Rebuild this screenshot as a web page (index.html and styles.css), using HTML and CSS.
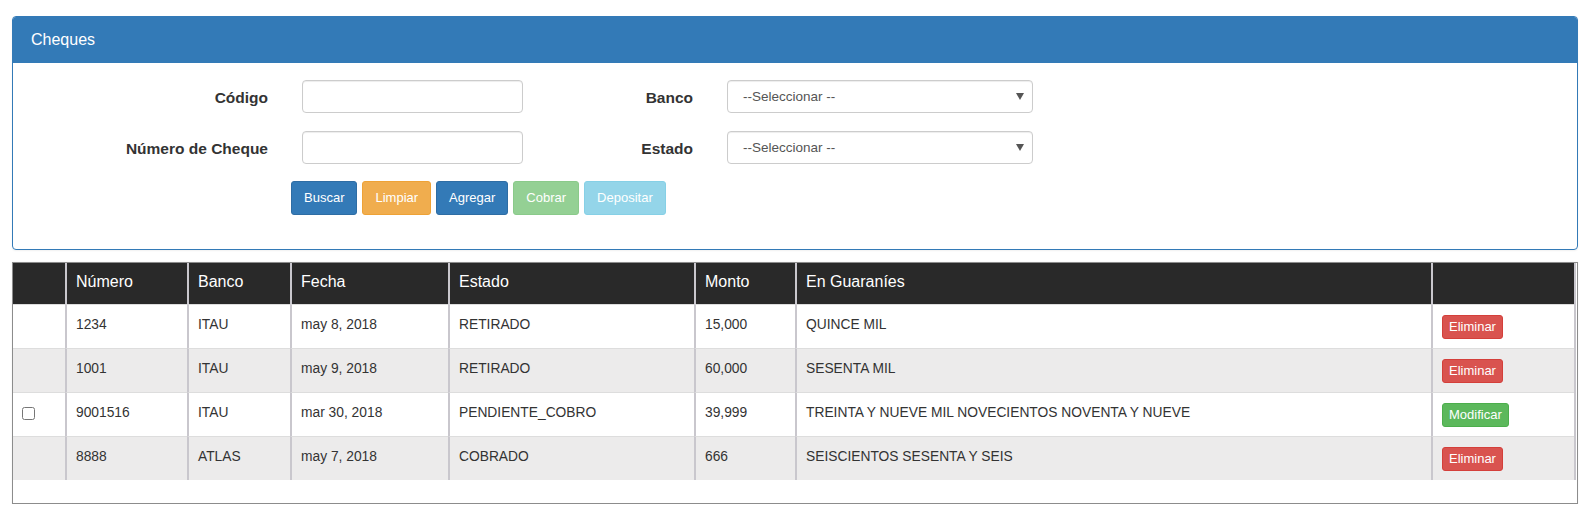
FILE: index.html
```html
<!DOCTYPE html>
<html lang="es">
<head>
<meta charset="utf-8">
<title>Cheques</title>
<link rel="stylesheet" href="styles.css">
</head>
<body>
<div class="page">
  <section class="panel">
    <header class="panel-heading">Cheques</header>
    <div class="panel-body">
      <div class="form-grid">
        <label class="lbl">Código</label>
        <input class="field" type="text">
        <label class="lbl">Banco</label>
        <div class="select">
          <span class="select-text">--Seleccionar --</span>
          <svg class="caret" width="8" height="7" viewBox="0 0 8 7"><polygon points="0,0 8,0 4,7" fill="#555"/></svg>
        </div>
        <label class="lbl">Número de Cheque</label>
        <input class="field" type="text">
        <label class="lbl">Estado</label>
        <div class="select">
          <span class="select-text">--Seleccionar --</span>
          <svg class="caret" width="8" height="7" viewBox="0 0 8 7"><polygon points="0,0 8,0 4,7" fill="#555"/></svg>
        </div>
      </div>
      <div class="actions">
        <button class="btn btn-primary">Buscar</button>
        <button class="btn btn-warning">Limpiar</button>
        <button class="btn btn-primary">Agregar</button>
        <button class="btn btn-success disabled">Cobrar</button>
        <button class="btn btn-info disabled">Depositar</button>
      </div>
    </div>
  </section>

  <div class="table-box">
    <table class="grid">
      <thead>
        <tr>
          <th class="c1"></th>
          <th class="c2">Número</th>
          <th class="c3">Banco</th>
          <th class="c4">Fecha</th>
          <th class="c5">Estado</th>
          <th class="c6">Monto</th>
          <th class="c7">En Guaraníes</th>
          <th class="c8"></th>
        </tr>
      </thead>
      <tbody>
        <tr>
          <td></td>
          <td>1234</td>
          <td>ITAU</td>
          <td>may 8, 2018</td>
          <td>RETIRADO</td>
          <td>15,000</td>
          <td>QUINCE MIL</td>
          <td><button class="sbtn sbtn-danger">Eliminar</button></td>
        </tr>
        <tr class="alt">
          <td></td>
          <td>1001</td>
          <td>ITAU</td>
          <td>may 9, 2018</td>
          <td>RETIRADO</td>
          <td>60,000</td>
          <td>SESENTA MIL</td>
          <td><button class="sbtn sbtn-danger">Eliminar</button></td>
        </tr>
        <tr>
          <td><input class="check" type="checkbox"></td>
          <td>9001516</td>
          <td>ITAU</td>
          <td>mar 30, 2018</td>
          <td>PENDIENTE_COBRO</td>
          <td>39,999</td>
          <td>TREINTA Y NUEVE MIL NOVECIENTOS NOVENTA Y NUEVE</td>
          <td><button class="sbtn sbtn-success">Modificar</button></td>
        </tr>
        <tr class="alt">
          <td></td>
          <td>8888</td>
          <td>ATLAS</td>
          <td>may 7, 2018</td>
          <td>COBRADO</td>
          <td>666</td>
          <td>SEISCIENTOS SESENTA Y SEIS</td>
          <td><button class="sbtn sbtn-danger">Eliminar</button></td>
        </tr>
      </tbody>
    </table>
  </div>
</div>
</body>
</html>
```

FILE: styles.css
```css
* { box-sizing: border-box; }

html, body {
  margin: 0;
  padding: 0;
  background: #fff;
}

body {
  font-family: "Liberation Sans", Arial, Helvetica, sans-serif;
  font-size: 14px;
  color: #333;
}

.page {
  padding: 16px 11px 0 12px;
}

/* ---------- panel ---------- */
.panel {
  border: 1px solid #337ab7;
  border-radius: 4px;
  box-shadow: 0 1px 2px rgba(0, 0, 0, 0.06);
  height: 234px;
}

.panel-heading {
  background: #337ab7;
  color: #fff;
  font-size: 16px;
  line-height: 20px;
  padding: 13px 17px 13px 18px;
  border-radius: 3px 3px 0 0;
}

.panel-body {
  padding: 17px 0 0 0;
}

.form-grid {
  display: grid;
  grid-template-columns: 255px 221px 136px 306px;
  grid-auto-rows: 33px;
  column-gap: 34px;
  row-gap: 18px;
  align-items: center;
}

.lbl {
  text-align: right;
  font-weight: bold;
  font-size: 15.5px;
  color: #333;
  padding-top: 2px;
}

.field {
  height: 33px;
  width: 100%;
  border: 1px solid #ccc;
  border-radius: 4px;
  box-shadow: inset 0 1px 1px rgba(0, 0, 0, 0.075);
  background: #fff;
  margin: 0;
  padding: 6px 12px;
  font: inherit;
}

.select {
  position: relative;
  height: 33px;
  border: 1px solid #ccc;
  border-radius: 4px;
  background: #fff;
  box-shadow: inset 0 1px 1px rgba(0, 0, 0, 0.075);
  display: flex;
  align-items: center;
  padding-left: 15px;
}

.select-text {
  font-size: 13.5px;
  color: #555;
}

.caret {
  position: absolute;
  right: 8px;
  top: 12px;
  display: block;
}

.actions {
  display: flex;
  gap: 5px;
  margin: 17px 0 0 278px;
}

.btn {
  font-family: inherit;
  font-size: 13px;
  line-height: 18px;
  padding: 7px 12px;
  border: 1px solid transparent;
  border-radius: 3px;
  color: #fff;
  cursor: pointer;
}

.btn-primary { background: #337ab7; border-color: #2e6da4; }
.btn-warning { background: #f0ad4e; border-color: #eea236; }
.btn-success { background: #5cb85c; border-color: #4cae4c; }
.btn-info    { background: #5bc0de; border-color: #46b8da; }
.btn.disabled { opacity: 0.65; }

/* ---------- table ---------- */
.table-box {
  margin-top: 12px;
  border: 1px solid #8c8c8c;
  padding: 0 2px 23px 0;
  box-shadow: 0 0 1px rgba(0, 0, 0, 0.1);
}

.grid {
  width: 100%;
  table-layout: fixed;
  border-collapse: separate;
  border-spacing: 0;
  border-right: 2px solid #c9c7cd;
}

.grid th,
.grid td {
  text-align: left;
  vertical-align: top;
  padding: 10px 10px 9px 9px;
  line-height: 20px;
}

.grid th + th,
.grid td + td {
  border-left: 2px solid #c9c7cd;
}

.grid thead th {
  background: #292929;
  color: #fff;
  font-weight: normal;
  font-size: 16px;
  padding-top: 9px;
  padding-bottom: 12px;
}

.grid tbody td {
  border-top: 1px solid #dddddd;
  color: #333;
  font-size: 13.8px;
}

.grid tbody tr.alt td {
  background: #ecebeb;
}

.c1 { width: 52px; }
.c2 { width: 122px; }
.c3 { width: 103px; }
.c4 { width: 158px; }
.c5 { width: 246px; }
.c6 { width: 101px; }
.c7 { width: 636px; }
.c8 { width: 143px; }

.check {
  width: 13px;
  height: 13px;
  margin: 4px 0 0 0;
  display: block;
}

.sbtn {
  font-family: inherit;
  font-size: 13px;
  line-height: 18px;
  padding: 2px 6px;
  border: 1px solid transparent;
  border-radius: 3px;
  color: #fff;
  display: block;
  cursor: pointer;
}

.sbtn-danger  { background: #d9534f; border-color: #d43f3a; }
.sbtn-success { background: #5cb85c; border-color: #4cae4c; }
```
